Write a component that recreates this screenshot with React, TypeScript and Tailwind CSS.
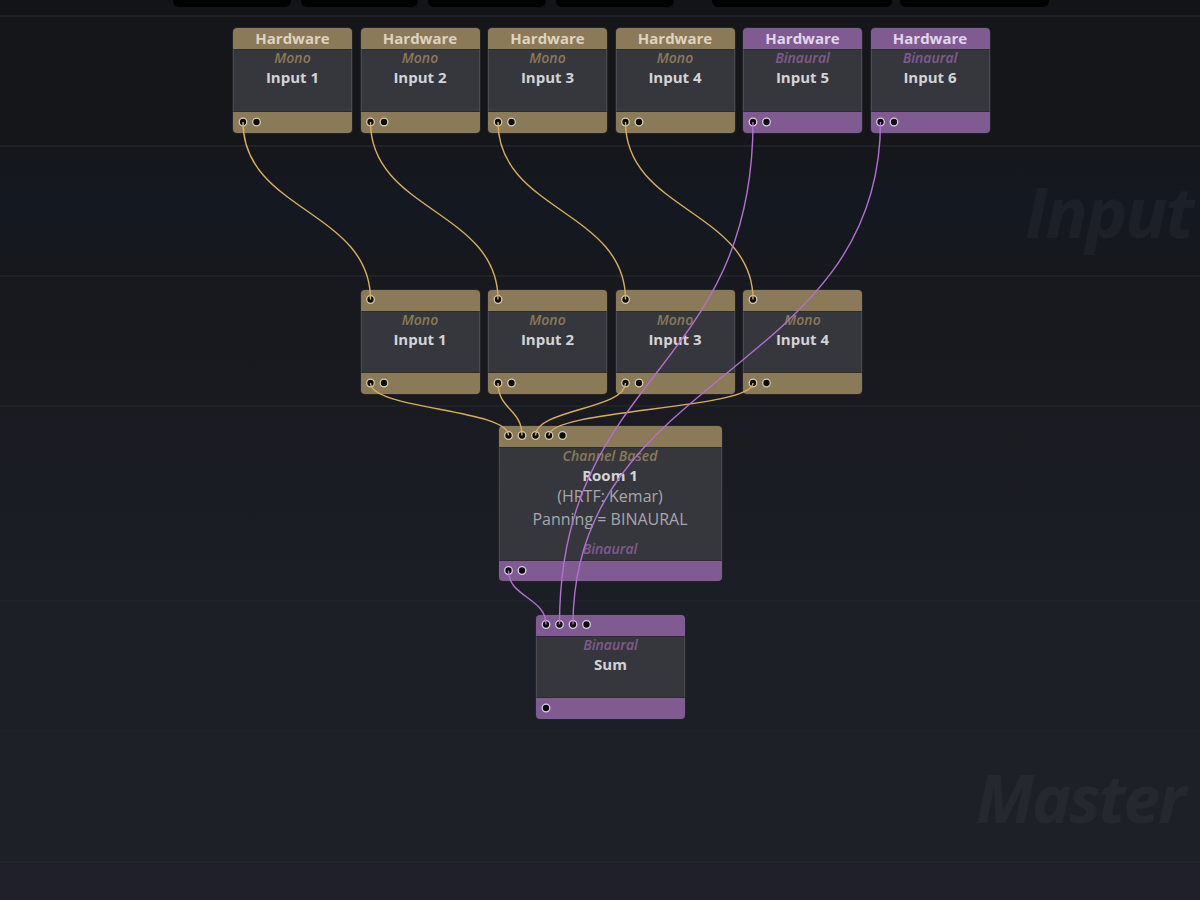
import React from "react";

type Kind = "tan" | "purple";

const hdr: Record<Kind, string> = {
  tan: "bg-[#8b7a57] text-[#ddd3bf]",
  purple: "bg-[#7f5b92] text-[#e2d6e8]",
};
const ftr: Record<Kind, string> = {
  tan: "bg-[#8b7a57]",
  purple: "bg-[#7f5b92]",
};
const sub: Record<Kind, string> = {
  tan: "text-[#8b7a57]",
  purple: "text-[#7f5b92]",
};

type NodeDef = {
  x: number;
  y: number;
  w: number;
  head: Kind;
  foot: Kind;
  title?: string;
  subtitle: string;
  subKind: Kind;
  name: string;
  bodyH: number;
  extra?: string[];
  bottomLabel?: { text: string; kind: Kind };
  ins: number;
  outs: number;
  footH?: number;
};

const hwX = [233, 360.5, 488, 615.5, 743, 870.5];

const nodes: NodeDef[] = [
  ...hwX.map((x, i) => ({
    x,
    y: 28,
    w: 119,
    head: (i < 4 ? "tan" : "purple") as Kind,
    foot: (i < 4 ? "tan" : "purple") as Kind,
    title: "Hardware",
    subtitle: i < 4 ? "Mono" : "Binaural",
    subKind: (i < 4 ? "tan" : "purple") as Kind,
    name: `Input ${i + 1}`,
    bodyH: 63,
    ins: 0,
    outs: 2,
  })),
  ...[360.5, 488, 615.5, 743].map((x, i) => ({
    x,
    y: 290,
    w: 119,
    head: "tan" as Kind,
    foot: "tan" as Kind,
    subtitle: "Mono",
    subKind: "tan" as Kind,
    name: `Input ${i + 1}`,
    bodyH: 62,
    ins: 1,
    outs: 2,
  })),
  {
    x: 498.5,
    y: 426,
    w: 223,
    head: "tan",
    foot: "purple",
    subtitle: "Channel Based",
    subKind: "tan",
    name: "Room 1",
    bodyH: 114,
    extra: ["(HRTF: Kemar)", "Panning = BINAURAL"],
    bottomLabel: { text: "Binaural", kind: "purple" },
    ins: 5,
    outs: 2,
    footH: 20,
  },
  {
    x: 536,
    y: 615,
    w: 149,
    head: "purple",
    foot: "purple",
    subtitle: "Binaural",
    subKind: "purple",
    name: "Sum",
    bodyH: 62,
    ins: 4,
    outs: 1,
  },
];

const HEAD_H = 21;

function Node({ n }: { n: NodeDef }) {
  const footH = n.footH ?? 21;
  return (
    <div
      className="absolute flex flex-col rounded-[4px] overflow-hidden shadow-[0_0_0_1px_#23242a]"
      style={{ left: n.x, top: n.y, width: n.w }}
    >
      <div
        className={`h-[21px] flex items-center justify-center text-[15px] font-bold leading-none ${hdr[n.head]}`}
      >
        {n.title ?? ""}
      </div>
      <div
        className="flex flex-col items-center bg-[#36373c] border-x border-x-[#4a4b51] border-y border-y-[#2c2d32]"
        style={{ height: n.bodyH }}
      >
        <div className={`text-[14px] italic font-semibold leading-[15px] ${sub[n.subKind]}`}>{n.subtitle}</div>
        <div className="text-[15px] font-bold leading-[20px] mt-[2px] text-[#d3d3d6]">{n.name}</div>
        {n.extra?.map((t) => (
          <div key={t} className="text-[16px] leading-[23px] text-[#a7a7ab]">
            {t}
          </div>
        ))}
        {n.bottomLabel && (
          <div className={`mt-auto mb-[3px] text-[14px] italic font-semibold leading-[16px] ${sub[n.bottomLabel.kind]}`}>
            {n.bottomLabel.text}
          </div>
        )}
      </div>
      <div className={ftr[n.foot]} style={{ height: footH }} />
    </div>
  );
}

function portsOf(n: NodeDef) {
  const footH = n.footH ?? 21;
  const ins = Array.from({ length: n.ins }, (_, i) => ({
    x: n.x + 10 + i * 13.5,
    y: n.y + 9.5,
    kind: n.head,
  }));
  const outs = Array.from({ length: n.outs }, (_, i) => ({
    x: n.x + 10 + i * 13.5,
    y: n.y + HEAD_H + n.bodyH + footH / 2 - 0.5,
    kind: n.foot,
  }));
  return { ins, outs };
}

const P = nodes.map(portsOf);
const wires: { a: { x: number; y: number }; b: { x: number; y: number }; c: string }[] = [];
for (let i = 0; i < 4; i++) wires.push({ a: P[i].outs[0], b: P[6 + i].ins[0], c: "#d8ae5e" });
for (let i = 0; i < 4; i++) wires.push({ a: P[6 + i].outs[0], b: P[10].ins[i], c: "#d8ae5e" });
wires.push({ a: P[10].outs[0], b: P[11].ins[0], c: "#b46fd2" });
wires.push({ a: P[4].outs[0], b: P[11].ins[1], c: "#b46fd2" });
wires.push({ a: P[5].outs[0], b: P[11].ins[2], c: "#b46fd2" });

function path(a: { x: number; y: number }, b: { x: number; y: number }) {
  const d = (b.y - a.y) / 2;
  return `M ${a.x} ${a.y} C ${a.x} ${a.y + d} ${b.x} ${b.y - d} ${b.x} ${b.y}`;
}

const tabs = [
  { w: 118, ml: 0 },
  { w: 117, ml: 10 },
  { w: 118, ml: 10 },
  { w: 118, ml: 10 },
  { w: 180, ml: 38 },
  { w: 149, ml: 8 },
];

function Band({ h, bg, label }: { h: number; bg: string; label?: string }) {
  return (
    <div
      className={`shrink-0 border-b-2 border-b-[#202229] flex items-center overflow-hidden whitespace-nowrap ${bg}`}
      style={{ height: h }}
    >
      {label && (
        <div className="pl-[1025px] text-[70px] font-bold italic leading-none text-white/[0.035] tracking-[-2px]">
          {label}
        </div>
      )}
    </div>
  );
}

export default function App() {
  return (
    <div
      className="relative w-[1200px] h-[900px] overflow-hidden bg-[#1f2029]"
      style={{ fontFamily: '"Open Sans", "Noto Sans", sans-serif' }}
    >
      <div className="flex flex-col h-full">
        <div className="h-[17px] shrink-0 bg-[#131418] border-b-2 border-b-[#1e2026] flex items-start pl-[173px]">
          {tabs.map((t, i) => (
            <div
              key={i}
              className="h-[7px] bg-black rounded-b-[6px]"
              style={{ width: t.w, marginLeft: t.ml }}
            />
          ))}
        </div>
        <Band h={130} bg="bg-[#14161a]" />
        <Band h={130} bg="bg-gradient-to-b from-[#15171b] via-[#141821] to-[#16181c]" label="Input" />
        <Band h={130} bg="bg-gradient-to-b from-[#17191e] to-[#181a20]" />
        <Band h={195} bg="bg-gradient-to-b from-[#191b21] to-[#1b1e25]" />
        <Band h={130} bg="bg-[#1c1f26]" />
        <div
          className="shrink-0 border-b-2 border-b-[#23252d] flex items-center overflow-hidden whitespace-nowrap bg-[#1e2028]"
          style={{ height: 131 }}
        >
          <div className="pl-[976px] text-[66px] font-bold italic leading-none text-white/[0.035] tracking-[-2px]">
            Master
          </div>
        </div>
        <div className="flex-1 bg-[#1f2029]" />
      </div>

      {nodes.map((n, i) => (
        <Node key={i} n={n} />
      ))}

      <svg className="absolute inset-0 pointer-events-none" width={1200} height={900}>
        {P.flatMap((p, i) =>
          [...p.ins, ...p.outs].map((pt, j) => (
            <circle
              key={`${i}-${j}`}
              cx={pt.x}
              cy={pt.y}
              r={3.8}
              fill="#0b0b0c"
              stroke={pt.kind === "tan" ? "#d6cab0" : "#dccbe6"}
              strokeWidth={1.3}
            />
          ))
        )}
        {wires.map((w, i) => (
          <path key={i} d={path(w.a, w.b)} fill="none" stroke={w.c} strokeWidth={1.4} />
        ))}
      </svg>
    </div>
  );
}
